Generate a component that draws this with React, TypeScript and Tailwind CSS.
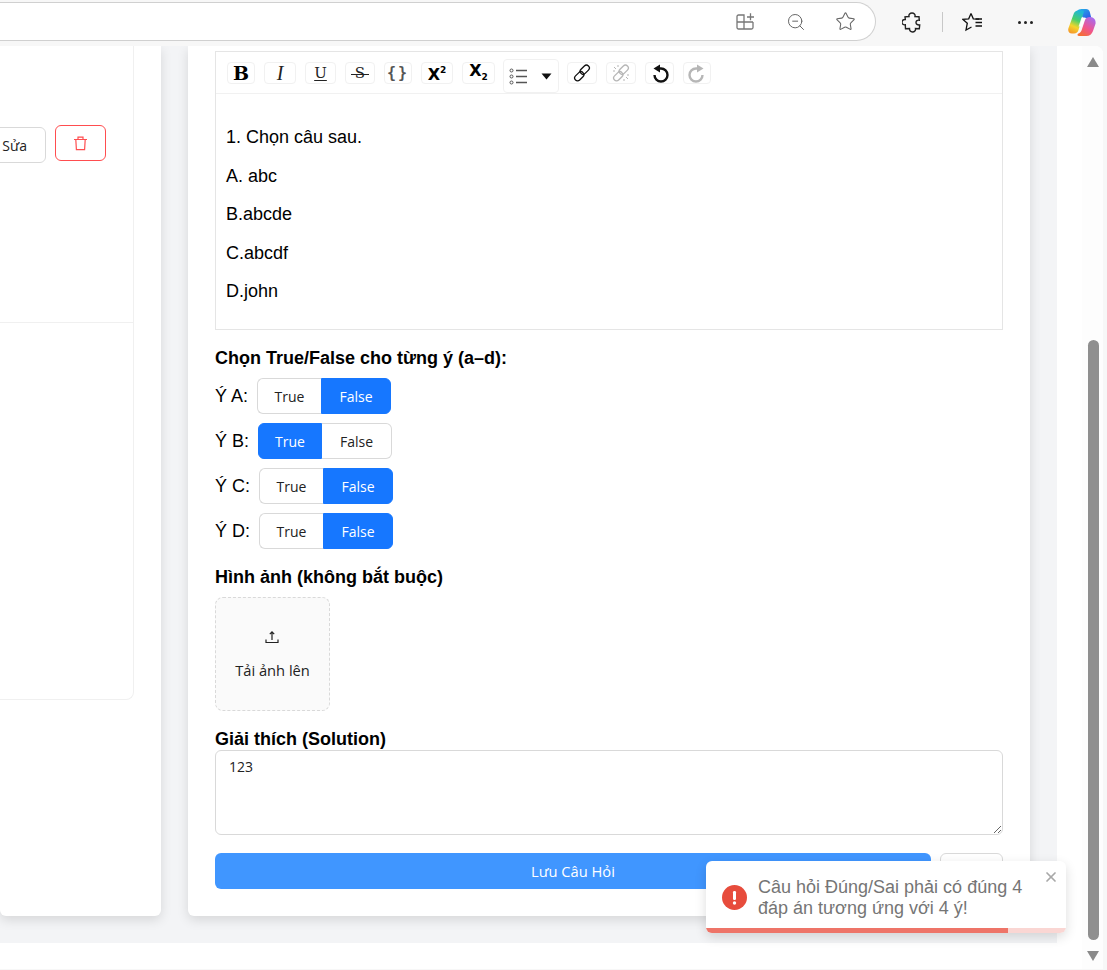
import { ZoomOut, Star, X } from "lucide-react";
import type { ReactNode } from "react";

const uiFont = "font-['Open_Sans',sans-serif]";

function ToolBtn({ width, children, off, extra }: { width: string; children: ReactNode; off?: boolean; extra?: string }) {
  return (
    <div
      className={`${width} ${extra ?? ""} h-[22px] shrink-0 flex items-center justify-center rounded-sm border border-[#f1f1f1] bg-white`}
    >
      <div className={`flex items-center justify-center ${off ? "opacity-30" : ""}`}>{children}</div>
    </div>
  );
}

function ChainIcon({ broken }: { broken?: boolean }) {
  return (
    <svg width="18" height="18" viewBox="0 0 18 18" fill="none" stroke="#111" strokeWidth="1.3">
      <rect x="6.500" y="2.800" width="10.500" height="5.800" rx="2.900" transform="rotate(-45 11.750 5.700)" />
      <rect x="1" y="9.400" width="10.500" height="5.800" rx="2.900" transform="rotate(-45 6.250 12.300)" />
      {broken && <path d="M2 3l2 2M1 7h2M6 1v2M16 15l-2-2M17 11h-2M12 17v-2" strokeWidth="1" />}
    </svg>
  );
}

function Toolbar() {
  return (
    <div className="h-[42px] flex items-start pt-[10px] pl-[11px] gap-[9px] border-b border-[#f1f1f1]">
      <ToolBtn width="w-[28px]">
        <span className="font-['DejaVu_Serif',serif] font-bold text-[19px] leading-none text-black">B</span>
      </ToolBtn>
      <ToolBtn width="w-[32px]">
        <span className="font-['Liberation_Serif',serif] italic text-[20px] leading-none text-[#222]">I</span>
      </ToolBtn>
      <ToolBtn width="w-[31px]">
        <span className="font-['DejaVu_Serif',serif] text-[15px] leading-none text-[#222] underline underline-offset-2">U</span>
      </ToolBtn>
      <ToolBtn width="w-[30px]">
        <span className="relative font-['DejaVu_Serif',serif] text-[15px] leading-none text-[#222]">
          S
          <span className="absolute left-[-4px] right-[-4px] top-[8px] h-px bg-[#222]" />
        </span>
      </ToolBtn>
      <ToolBtn width="w-[28px]">
        <span className="font-['DejaVu_Sans_Mono',monospace] font-bold text-[15px] leading-none tracking-[2px] text-[#555]">{"{}"}</span>
      </ToolBtn>
      <ToolBtn width="w-[32px]">
        <span className="font-['DejaVu_Sans',sans-serif] font-bold text-[16px] leading-none text-black mt-[2px]">
          X<span className="text-[9px] align-[7px]">2</span>
        </span>
      </ToolBtn>
      <ToolBtn width="w-[33px]">
        <span className="font-['DejaVu_Sans',sans-serif] font-bold text-[16px] leading-none text-black -mt-[2px]">
          X<span className="text-[9px] align-[-4px]">2</span>
        </span>
      </ToolBtn>
      <div className="w-[56px] h-[34px] -ml-[1px] -mt-[3px] shrink-0 flex items-center rounded-sm border border-[#f1f1f1] pl-[5px] pt-[1px]">
        <svg width="19" height="17" viewBox="0 0 19 17" fill="none" stroke="#555">
          <circle cx="2.500" cy="2.500" r="1.500" />
          <circle cx="2.500" cy="8.500" r="1.500" />
          <circle cx="2.500" cy="14.500" r="1.500" />
          <path d="M7 2.500h11M7 8.500h11M7 14.500h11" strokeWidth="1.600" />
        </svg>
        <svg className="ml-[13px]" width="11" height="7" viewBox="0 0 11 7">
          <path d="M0.500 0.500h10L5.500 6.500z" fill="#111" />
        </svg>
      </div>
      <ToolBtn width="w-[30px]" extra="-ml-[1px]">
        <ChainIcon />
      </ToolBtn>
      <ToolBtn width="w-[30px]" off>
        <ChainIcon broken />
      </ToolBtn>
      <ToolBtn width="w-[29px]">
        <svg width="18" height="19" viewBox="0 0 18 19" fill="none">
          <path d="M3.500 11a6.500 6.500 0 1 0 6.500-6.500H8" stroke="#111" strokeWidth="2.400" />
          <path d="M9 0.500v8L2.500 4.500z" fill="#111" />
        </svg>
      </ToolBtn>
      <ToolBtn width="w-[28px]" off>
        <svg width="18" height="19" viewBox="0 0 18 19" fill="none">
          <path d="M14.500 11A6.500 6.500 0 1 1 8 4.500h2" stroke="#111" strokeWidth="2.400" />
          <path d="M9 0.500v8l6.500-4z" fill="#111" />
        </svg>
      </ToolBtn>
    </div>
  );
}

function Choice({ label, value }: { label: string; value: boolean }) {
  return (
    <div className="h-[36px] flex items-center mb-[9px]">
      <span className="text-[18px] text-black mr-[9px]">{label}</span>
      <div className={`${uiFont} flex h-[36px] text-[14px]`}>
        <div
          className={`w-[64px] flex items-center justify-center rounded-l-md border ${
            value ? "bg-[#1677ff] border-[#1677ff] text-white" : "bg-white border-[#d9d9d9] border-r-0 text-[#222]"
          }`}
        >
          True
        </div>
        <div
          className={`w-[70px] flex items-center justify-center rounded-r-md border ${
            value ? "bg-white border-[#d9d9d9] border-l-0 text-[#222]" : "bg-[#1677ff] border-[#1677ff] text-white"
          }`}
        >
          False
        </div>
      </div>
    </div>
  );
}

function BrowserBar() {
  return (
    <div className="h-[46px] shrink-0 flex items-start bg-[#f7f7f7]">
      <div className="w-[876px] h-[39px] mt-[2px] flex items-center rounded-r-[20px] border border-l-0 border-[#d0d0d0] bg-white">
        <svg className="ml-[736px]" width="19" height="19" viewBox="0 0 19 19" fill="none" stroke="#777" strokeWidth="1.300">
          <path d="M2.500 3H8v14H2.500A1.500 1.500 0 0 1 1 15.500V4.500A1.500 1.500 0 0 1 2.500 3zM1 10h16M8 17h7.500a1.500 1.500 0 0 0 1.500-1.500V10M11 5h7M14.500 1.200v7" />
        </svg>
        <ZoomOut size={20} strokeWidth={1.2} className="ml-[31px] text-[#666]" />
        <Star size={21} strokeWidth={1.2} className="ml-[29px] text-[#666]" />
      </div>
      <div className="flex items-center h-[44px]">
        <svg className="ml-[26px]" width="20" height="21" viewBox="0 0 20 21" fill="none" stroke="#222" strokeWidth="1.400">
          <path d="M7 4.500C6.500 2.500 8 1 10 1s3.500 1.500 3 3.500l4 .2.300 3.500c-2-.4-3.300.8-3.300 2.300s1.300 2.800 3.700 2.500l-.4 3.800-3.800-.2c.3 2-1 3.400-3 3.400s-3-1.400-3-3.400l-4 .2-.2-4c-2 .4-3.300-.9-3.300-2.600s1.300-3 3.300-2.700L3 4.800z" />
        </svg>
        <div className="ml-[20px] w-px h-[20px] bg-[#c8c8c8]" />
        <svg className="ml-[19px]" width="21" height="20" viewBox="0 0 21 20" fill="none" stroke="#111" strokeWidth="1.300">
          <path d="M9 1.500l2.300 5.300 5.700.4M9 1.500L6.700 6.800 1 7.400l4.300 3.800L4 18l5.500-3" />
          <path d="M13.500 7h6.500M13.500 10.500h6.500M13.500 14h6.500" />
        </svg>
        <div className="ml-[35px] flex gap-[3px]">
          <span className="w-[3px] h-[3px] rounded-full bg-[#222]" />
          <span className="w-[3px] h-[3px] rounded-full bg-[#222]" />
          <span className="w-[3px] h-[3px] rounded-full bg-[#222]" />
        </div>
        <svg className="ml-[35px]" width="28" height="27" viewBox="0 0 28 27">
          <defs>
            <linearGradient id="cpA" x1="0" y1="0" x2="1" y2="1">
              <stop offset="0" stopColor="#22b8e8" />
              <stop offset="1" stopColor="#2f55e8" />
            </linearGradient>
            <linearGradient id="cpB" x1="0.6" y1="0" x2="0.3" y2="1">
              <stop offset="0" stopColor="#1fb6d8" />
              <stop offset="0.4" stopColor="#4ad06a" />
              <stop offset="0.7" stopColor="#f4d52b" />
              <stop offset="1" stopColor="#f59a2a" />
            </linearGradient>
            <linearGradient id="cpC" x1="0.8" y1="0" x2="0.2" y2="1">
              <stop offset="0" stopColor="#a56cf2" />
              <stop offset="0.55" stopColor="#f0558f" />
              <stop offset="1" stopColor="#f5702f" />
            </linearGradient>
          </defs>
          <path d="M9 2C10 .7 11.500 0 13.500 0H18c2 0 3.200 1 3.800 3l1.500 6H15.500z" fill="url(#cpA)" />
          <path d="M6 4C7 2.500 8 1.500 10 1.500h4.500c1 0 1.600.8 1.200 1.800L10.500 21c-.6 2-2 3.500-4.500 3.500H3.800C1 24.500-.5 22 .5 19z" fill="url(#cpB)" />
          <path d="M22 8C26 8 28 11 27.600 14.500L25 22c-1 3-3.500 5-6.500 5H11c-1.500 0-2-1.200-1-2.200 1.500-.3 3-1.800 3.500-3.300L17 11c.6-2 2.500-3 5-3z" fill="url(#cpC)" />
          <path d="M13.500 8.500h4l-3.500 9h-3.500z" fill="#fff" opacity="0.850" />
        </svg>
      </div>
    </div>
  );
}

function Scrollbar() {
  return (
    <div className="w-[21px] shrink-0 flex flex-col items-center bg-[#fdfdfd] pt-[11px] pl-[1px]">
      <div className="w-0 h-0 border-x-[6px] border-x-transparent border-b-[10px] border-b-[#8a8a8a]" />
      <div className="w-[11px] h-[600px] mt-[273px] rounded-full bg-[#8f8f8f]" />
      <div className="mt-[11px] w-0 h-0 border-x-[6px] border-x-transparent border-t-[10px] border-t-[#8a8a8a]" />
    </div>
  );
}

export default function App() {
  return (
    <div className="relative w-[1107px] h-[970px] overflow-hidden flex flex-col bg-[#f7f7f7] font-['Liberation_Sans',Arial,sans-serif]">
      <BrowserBar />
      <div className="flex-1 mr-[4px] mb-[1px] flex rounded-tr-lg bg-white overflow-hidden">
        <div className="w-[1057px] h-[897px] shrink-0 flex gap-[27px] bg-[#f3f4f6]">
          <div className="w-[161px] h-[870px] shrink-0 rounded-b-md bg-white shadow-[0_4px_12px_rgba(0,0,0,0.12)]">
            <div className="w-[134px] h-[654px] border-r border-b border-[#f0f0f0] rounded-br-lg">
              <div className="h-[277px] border-b border-[#f0f0f0] flex justify-end items-start gap-[9px] pt-[79px] pr-[27px]">
                <div className={`${uiFont} w-[70px] h-[36px] mt-[2px] shrink-0 flex items-center justify-end pr-[18px] rounded-md border border-[#d9d9d9] text-[14px] text-[#222]`}>
                  Sửa
                </div>
                <div className="w-[51px] h-[36px] shrink-0 flex items-center justify-center rounded-md border border-[#ff4d4f] text-[#ff4d4f]">
                  <svg width="15" height="15" viewBox="0 0 15 15" fill="none" stroke="currentColor" strokeWidth="1.200">
                    <path d="M1 3.500h13M5 3.500V1.200h5v2.300M2.800 3.500l.6 10.200h8.200l.6-10.200" />
                  </svg>
                </div>
              </div>
            </div>
          </div>
          <div className="w-[842px] h-[870px] shrink-0 rounded-b-md bg-white shadow-[0_4px_12px_rgba(0,0,0,0.12)] px-[27px] pt-[5px]">
            <div className="h-[279px] border border-[#e5e5e5]">
              <Toolbar />
              <div className="pl-[10px] pt-[33px] text-[18px] leading-[20px] text-black">
                <p className="mb-[18.500px]">1. Chọn câu sau.</p>
                <p className="mb-[18.500px]">A. abc</p>
                <p className="mb-[18.500px]">B.abcde</p>
                <p className="mb-[18.500px]">C.abcdf</p>
                <p>D.john</p>
              </div>
            </div>
            <div className="mt-[19px] h-[18px] leading-[18px] text-[18px] font-bold text-black">
              Chọn True/False cho từng ý (a–d):
            </div>
            <div className="mt-[11px]">
              <Choice label="Ý A:" value={false} />
              <Choice label="Ý B:" value={true} />
              <Choice label="Ý C:" value={false} />
              <Choice label="Ý D:" value={false} />
            </div>
            <div className="mt-[19px] h-[18px] leading-[18px] text-[18px] font-bold text-black">
              Hình ảnh (không bắt buộc)
            </div>
            <div className="mt-[11px] w-[115px] h-[114px] flex flex-col items-center rounded-lg border border-dashed border-[#d9d9d9] bg-[#fafafa] pt-[32px]">
              <svg width="14" height="14" viewBox="0 0 14 14" fill="none" stroke="#222" strokeWidth="1.200" className="-ml-[2px]">
                <path d="M7 10V2M4.800 4.200L7 1.800l2.200 2.400M1 9.500v3h12v-3" />
              </svg>
              <span className={`${uiFont} mt-[15px] text-[14.700px] leading-[22px] text-[#222]`}>Tải ảnh lên</span>
            </div>
            <div className="mt-[19px] h-[20px] leading-[18px] text-[18px] font-bold text-black">
              Giải thích (Solution)
            </div>
            <textarea
              defaultValue="123"
              className={`${uiFont} block w-full h-[85px] rounded-md border border-[#d9d9d9] px-[13px] py-[5px] text-[14px] leading-[22px] text-[#222] outline-none`}
            />
            <div className="mt-[18px] flex gap-[9px]">
              <div className={`${uiFont} flex-1 h-[36px] flex items-center justify-center rounded-md bg-[#4096ff] text-[14.700px] text-white`}>
                Lưu Câu Hỏi
              </div>
              <div className="w-[63px] h-[36px] rounded-md border border-[#d9d9d9]" />
            </div>
          </div>
        </div>
        <div className="w-[25px] shrink-0" />
        <Scrollbar />
      </div>

      <div className="absolute left-[706px] top-[861px] w-[360px] h-[72px] overflow-hidden rounded-md bg-white shadow-[0_4px_12px_rgba(0,0,0,0.14)]">
        <div className="flex items-center h-[67px] pt-[5px] pl-[16px] pr-[40px]">
          <svg className="shrink-0" width="25" height="25" viewBox="0 0 25 25">
            <circle cx="12.500" cy="12.500" r="12.500" fill="#e74c3c" />
            <rect x="11" y="6" width="3" height="9" rx="1.200" fill="#fff" />
            <circle cx="12.500" cy="18" r="1.700" fill="#fff" />
          </svg>
          <p className="ml-[11px] mt-[1px] text-[18px] leading-[21px] text-[#757575]">Câu hỏi Đúng/Sai phải có đúng 4 đáp án tương ứng với 4 ý!</p>
        </div>
        <X size={16} strokeWidth={2.6} className="absolute right-[7px] top-[8px] text-[#a8a8a8]" />
        <div className="absolute left-0 bottom-0 w-full h-[5px] bg-[#fad6d3]">
          <div className="w-[302px] h-full bg-[#ee7468]" />
        </div>
      </div>
    </div>
  );
}
